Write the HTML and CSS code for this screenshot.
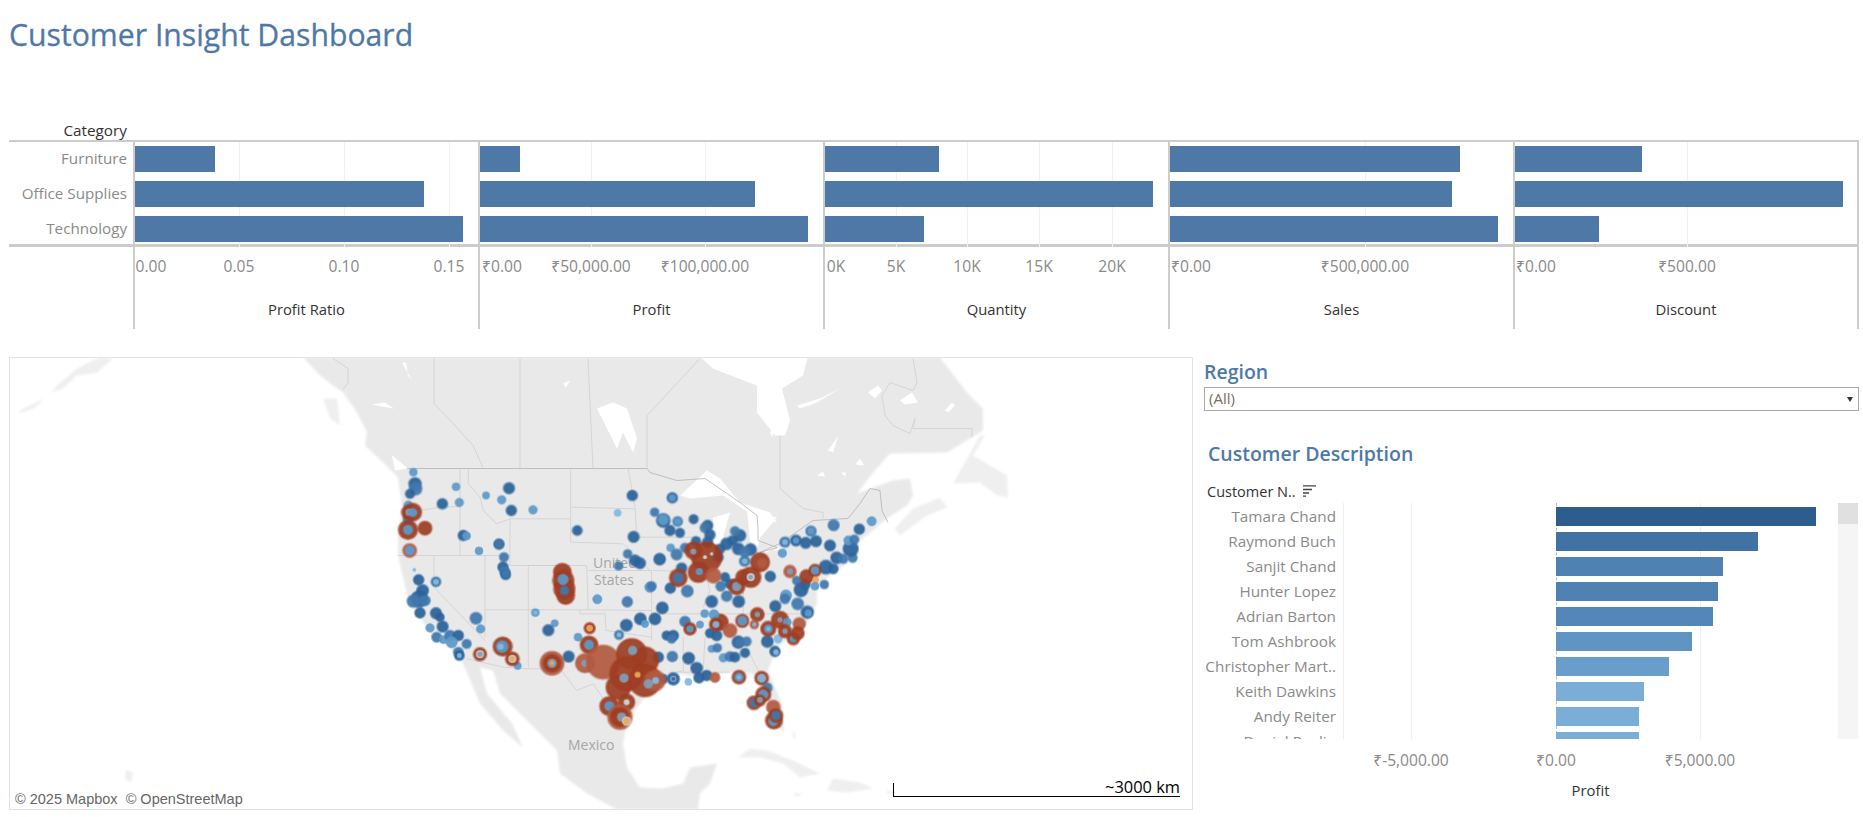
FILE: index.html
```html
<!DOCTYPE html>
<html lang="en">
<head>
<meta charset="utf-8">
<title>Customer Insight Dashboard</title>
<link rel="stylesheet" href="styles.css">
</head>
<body>
<main class="page">
  <h1 class="title">Customer Insight Dashboard</h1>
  <div class="cat-head">Category</div>
  <section class="chart">
    <div class="cats">
      <div class="cat-list">
        <div class="cat">Furniture</div>
        <div class="cat">Office Supplies</div>
        <div class="cat">Technology</div>
      </div>
    </div>
    <div class="panel">
      <div class="plot">
        <i class="grid" style="left:104px"></i><i class="grid" style="left:209px"></i><i class="grid" style="left:314px"></i>
        <div class="bar" style="width:80px"></div><div class="bar" style="width:289px"></div><div class="bar" style="width:328px"></div>
      </div>
      <div class="ticks">
        <span class="tick" style="left:16px">0.00</span><span class="tick" style="left:104px">0.05</span><span class="tick" style="left:209px">0.10</span><span class="tick" style="left:314px">0.15</span>
      </div>
      <div class="axis-title">Profit Ratio</div>
    </div>
    <div class="panel">
      <div class="plot">
        <i class="grid" style="left:111px"></i><i class="grid" style="left:225px"></i>
        <div class="bar" style="width:40px"></div><div class="bar" style="width:275px"></div><div class="bar" style="width:328px"></div>
      </div>
      <div class="ticks">
        <span class="tick" style="left:22px">₹0.00</span><span class="tick" style="left:111px">₹50,000.00</span><span class="tick" style="left:225px">₹100,000.00</span>
      </div>
      <div class="axis-title">Profit</div>
    </div>
    <div class="panel">
      <div class="plot">
        <i class="grid" style="left:71px"></i><i class="grid" style="left:142px"></i><i class="grid" style="left:214px"></i><i class="grid" style="left:287px"></i>
        <div class="bar" style="width:114px"></div><div class="bar" style="width:328px"></div><div class="bar" style="width:99px"></div>
      </div>
      <div class="ticks">
        <span class="tick" style="left:11px">0K</span><span class="tick" style="left:71px">5K</span><span class="tick" style="left:142px">10K</span><span class="tick" style="left:214px">15K</span><span class="tick" style="left:287px">20K</span>
      </div>
      <div class="axis-title">Quantity</div>
    </div>
    <div class="panel">
      <div class="plot">
        <i class="grid" style="left:195px"></i>
        <div class="bar" style="width:290px"></div><div class="bar" style="width:282px"></div><div class="bar" style="width:328px"></div>
      </div>
      <div class="ticks">
        <span class="tick" style="left:21px">₹0.00</span><span class="tick" style="left:195px">₹500,000.00</span>
      </div>
      <div class="axis-title">Sales</div>
    </div>
    <div class="panel panel-last">
      <div class="plot">
        <i class="grid" style="left:172px"></i>
        <div class="bar" style="width:127px"></div><div class="bar" style="width:328px"></div><div class="bar" style="width:84px"></div>
      </div>
      <div class="ticks">
        <span class="tick" style="left:21px">₹0.00</span><span class="tick" style="left:172px">₹500.00</span>
      </div>
      <div class="axis-title">Discount</div>
    </div>
  </section>

  <section class="lower">
    <div class="map">
      <svg class="map-svg" viewBox="10 358 1182 450" aria-hidden="true">
        <defs>
          <filter id="soft" x="-2%" y="-2%" width="104%" height="104%"><feGaussianBlur stdDeviation="0.45"/></filter>
          <filter id="softer" x="-2%" y="-2%" width="104%" height="104%"><feGaussianBlur stdDeviation="1"/></filter>
        </defs>
        <g class="land" filter="url(#softer)">
          <path d="M303 357L320 375L333 385L343 392L357 412L367 432L365 445L383 462L398 477L402 507L398 537L398 555L402 573L408 597L420 617L433 637L453 650L463 663L480 703L503 730L523 747L512 723L487 693L480 667L493 670L500 693L527 720L557 750L560 773L587 793L617 809L698 809L700 793L710 783L717 763L690 767L683 783L663 788L640 787L627 767L623 743L627 720L630 717L657 680L677 673L697 677L730 672L753 673L767 697L778 727L784 731L782 703L768 670L777 647L807 623L817 603L817 587L823 580L847 563L858 553L857 543L873 530L887 518L907 505L913 495L910 478L893 480L857 493L873 472L890 453L947 452L983 430L983 408L967 392L940 357Z"/>
          <path class="faint" d="M953 483L965 462L980 435L985 435L973 455L985 462L1007 475L1008 497L997 495L980 482Z"/>
          <path class="faint" d="M895 528L913 508L940 497L947 507L927 515L900 535Z"/>
          <path class="faint" d="M113 358L97 372L77 375L63 388L52 392L57 385L77 368L93 360L100 357Z"/>
          <path class="faint" d="M43 398L36 402L30 405L20 410L19 413L33 408L40 403Z"/>
          <path class="faint" d="M323 398L337 398L340 425L330 418Z"/>
          <path class="faint" d="M738 757L750 748L767 750L793 760L820 773L800 777L783 763L760 757Z"/>
          <path class="faint" d="M827 790L833 778L860 782L873 788L847 792Z"/>
          <path class="faint" d="M792 792L803 794L797 796Z"/>
          <path class="faint" d="M887 790L895 791L895 794L887 793Z"/>
          <path class="faint" d="M792 730L796 734L794 740Z"/>
          <path class="faint" d="M126 769L133 772L131 782L125 778Z"/>
        </g>
        <g class="water" filter="url(#soft)">
          <path d="M700 356L713 368L757 385L757 412L775 435L785 435L790 420L782 388L803 375L808 356Z"/>
          <path d="M680 495L707 470L720 478L740 502L770 512L777 522L753 515L723 495L690 498Z"/>
          <path d="M713 517L730 512L723 537L720 550L713 550Z"/>
          <path d="M747 510L777 517L760 537L757 550L750 540Z"/>
          <path d="M757 553L780 543L767 552Z"/>
          <path d="M773 550L807 535L800 540L780 550Z"/>
          <path d="M597 408L613 402L627 408L637 438L633 452L623 432L617 448L607 428Z"/>
          <path d="M563 383L570 380L566 387Z"/>
          <path d="M797 405L820 398L840 388L815 403L800 408Z"/>
          <path d="M828 450L838 436L833 452Z"/>
          <path d="M900 400L912 392L918 402L905 404Z"/>
          <path d="M945 410L952 402L955 405L948 412Z"/>
          <path d="M817 475L823 471L825 476Z"/>
          <path d="M855 464L860 458L864 465Z"/>
          <path d="M841 472L846 472L845 476Z"/>
          <path d="M868 392L878 385L882 390L875 398Z"/>
          <path d="M406 362L408 375L412 380L402 362Z"/>
          <path d="M372 404L385 402L394 408L382 406Z"/>
          <path d="M392 455L408 468L395 470Z"/>
          <path d="M770 432L776 425L772 437Z"/>
        </g>
        <path class="border" d="M407 468L647 468L650 472L677 480L705 478L740 502L757 515L758 528L758 540L777 547L760 552L780 543L813 520L848 518L860 503L870 488L880 490L882 510L888 522"/>
        <path class="border thin" d="M333 358L348 368L348 382L343 389M434 358L434 403L452 422L473 445L483 467M520 358L520 468M588 358L593 468M647 468L647 415L700 358M780 435L780 488L803 508L823 512L823 518M913 358L917 382L913 390L890 382L882 395L885 415L893 425L910 433L915 418L913 428L972 428L972 437"/>
        <g transform="translate(330 440) scale(.3333)">
          <path class="border state" d="M270 210L330 200L390 198M390 85L390 345M415 85L415 130L450 170L460 210L500 250L540 235L720 235M540 235L540 375L720 375M722 85L722 305M722 200L915 205M895 85L915 200L920 290L1110 290M722 305L880 310L960 390M205 345L540 345M312 345L312 440L465 600M465 345L465 590M595 375L595 685M595 375L770 375L775 508M465 508L775 508M750 508L750 520L825 520L828 570L965 590M410 655L520 680L590 685L690 685L740 750L790 730L830 790M775 390L965 390M775 508L965 510M965 390L965 600M1110 290L1125 395M970 390L1125 395M1125 395L1140 450L1120 500M1060 590L1060 690L1040 695L1200 695M1125 590L1120 690M965 520L1240 520M1240 600L1290 700M1240 400L1240 520M1240 520L1440 520"/>
        </g>
        <text class="place" x="593" y="567">United</text>
        <text class="place" x="594" y="584">States</text>
        <text class="place" x="568" y="749">Mexico</text>
        <g class="dots" filter="url(#soft)" transform="translate(330 440) scale(.3333)">
          <circle class="b3" cx="250" cy="95" r="12"/><circle class="b1" cx="255" cy="130" r="18"/><circle class="b2" cx="257" cy="145" r="18"/><circle class="b1" cx="240" cy="160" r="13"/>
          <circle class="b3" cx="378" cy="139" r="12"/><circle class="b1" cx="337" cy="190" r="15"/><circle class="b3" cx="388" cy="186" r="13"/><circle class="b3" cx="468" cy="165" r="11"/><circle class="b3" cx="515" cy="178" r="13"/><circle class="b1" cx="537" cy="143" r="16"/><circle class="b1" cx="544" cy="210" r="15"/><circle class="b3" cx="609" cy="208" r="13"/>
          <circle class="b3" cx="235" cy="195" r="14"/><circle class="b2" cx="235" cy="235" r="15"/>
          <circle class="b1" cx="400" cy="285" r="15"/><circle class="b3" cx="410" cy="286" r="12"/><circle class="b3" cx="447" cy="331" r="12"/><circle class="b1" cx="507" cy="311" r="15"/><circle class="b2" cx="507" cy="311" r="10"/><circle class="b2" cx="522" cy="350" r="13"/><circle class="b1" cx="519" cy="380" r="15"/><circle class="b2" cx="525" cy="395" r="15"/><circle class="b1" cx="527" cy="403" r="14"/><circle class="b2" cx="527" cy="400" r="10"/>
          <circle class="b4" cx="253" cy="388" r="5"/><circle class="b1" cx="266" cy="418" r="15"/><circle class="b2" cx="318" cy="424" r="14"/><circle class="b4" cx="318" cy="424" r="8"/>
          <circle class="b1" cx="278" cy="450" r="17"/><circle class="b1" cx="268" cy="475" r="24"/><circle class="b2" cx="250" cy="482" r="18"/><circle class="b2" cx="285" cy="480" r="15"/><circle class="b1" cx="270" cy="517" r="15"/><circle class="b1" cx="318" cy="518" r="16"/><circle class="b1" cx="330" cy="530" r="12"/><circle class="b1" cx="338" cy="558" r="16"/><circle class="b3" cx="300" cy="562" r="13"/><circle class="b2" cx="320" cy="590" r="14"/><circle class="b3" cx="340" cy="597" r="12"/><circle class="b2" cx="360" cy="585" r="15"/><circle class="b1" cx="385" cy="585" r="15"/><circle class="b3" cx="365" cy="605" r="17"/><circle class="b2" cx="410" cy="610" r="13"/><circle class="b2" cx="385" cy="635" r="14"/><circle class="b1" cx="388" cy="645" r="14"/><circle class="b4" cx="388" cy="645" r="7"/>
          <circle class="b2" cx="438" cy="533" r="17"/><circle class="b3" cx="452" cy="565" r="13"/><circle class="b3" cx="616" cy="516" r="12"/><circle class="b4" cx="616" cy="516" r="6"/><circle class="b3" cx="674" cy="548" r="11"/><circle class="b1" cx="655" cy="569" r="16"/><circle class="b3" cx="744" cy="590" r="12"/><circle class="b2" cx="867" cy="583" r="13"/><circle class="b4" cx="867" cy="583" r="7"/><circle class="b1" cx="889" cy="554" r="17"/><circle class="b1" cx="931" cy="535" r="17"/><circle class="b3" cx="945" cy="550" r="11"/><circle class="b1" cx="975" cy="535" r="17"/><circle class="b1" cx="997" cy="502" r="17"/>
          <circle class="b1" cx="742" cy="270" r="14"/><circle class="b1" cx="907" cy="165" r="15"/><circle class="b4" cx="863" cy="217" r="11"/><circle class="b1" cx="911" cy="289" r="16"/><circle class="b2" cx="893" cy="340" r="12"/><circle class="b2" cx="866" cy="376" r="12"/><circle class="b1" cx="915" cy="360" r="16"/><circle class="b1" cx="930" cy="368" r="16"/><circle class="b1" cx="989" cy="356" r="17"/>
          <circle class="b1" cx="1027" cy="172" r="15"/><circle class="b3" cx="1027" cy="172" r="10"/><circle class="b2" cx="974" cy="215" r="12"/><circle class="b1" cx="1000" cy="240" r="20"/><circle class="b3" cx="1000" cy="238" r="16"/><circle class="b2" cx="1043" cy="243" r="14"/><circle class="b3" cx="1043" cy="243" r="10"/><circle class="b1" cx="1020" cy="270" r="15"/><circle class="b1" cx="1050" cy="277" r="13"/><circle class="b1" cx="1091" cy="236" r="13"/><circle class="b1" cx="1133" cy="255" r="15"/><circle class="b2" cx="1125" cy="262" r="14"/><circle class="b1" cx="1140" cy="283" r="15"/>
          <circle class="b3" cx="1022" cy="322" r="12"/><circle class="b2" cx="1065" cy="322" r="13"/><circle class="b2" cx="1040" cy="342" r="16"/><circle class="b1" cx="1098" cy="302" r="13"/><circle class="b1" cx="1133" cy="305" r="15"/><circle class="b1" cx="1170" cy="325" r="14"/><circle class="b1" cx="1190" cy="310" r="17"/><circle class="b1" cx="1208" cy="300" r="14"/><circle class="b1" cx="1230" cy="285" r="17"/><circle class="b2" cx="1215" cy="272" r="13"/><circle class="b1" cx="1225" cy="325" r="17"/><circle class="b1" cx="1262" cy="327" r="17"/><circle class="b2" cx="1245" cy="335" r="15"/><circle class="b1" cx="1165" cy="350" r="14"/>
          <circle class="b3" cx="960" cy="440" r="16"/><circle class="b2" cx="965" cy="437" r="13"/><circle class="b1" cx="1021" cy="443" r="15"/><circle class="b1" cx="1055" cy="383" r="15"/><circle class="b2" cx="1072" cy="452" r="17"/><circle class="b1" cx="1145" cy="483" r="17"/><circle class="b2" cx="1172" cy="437" r="14"/><circle class="b1" cx="1200" cy="430" r="14"/><circle class="b2" cx="1190" cy="467" r="15"/><circle class="b1" cx="1226" cy="483" r="17"/><circle class="b1" cx="1185" cy="410" r="13"/><circle class="b3" cx="802" cy="476" r="14"/><circle class="b2" cx="892" cy="484" r="15"/>
          <circle class="b1" cx="985" cy="650" r="15"/><circle class="b2" cx="1027" cy="648" r="15"/><circle class="b1" cx="1076" cy="653" r="17"/><circle class="b1" cx="1100" cy="683" r="17"/><circle class="b1" cx="1000" cy="715" r="13"/><circle class="b1" cx="1030" cy="715" r="18"/><circle class="w" cx="1030" cy="715" r="9"/><circle class="b1" cx="1030" cy="715" r="5"/><circle class="b4" cx="1075" cy="724" r="11"/><circle class="b1" cx="1107" cy="712" r="15"/><circle class="b1" cx="1130" cy="705" r="15"/><circle class="r2" cx="1155" cy="711" r="14"/>
          <circle class="b2" cx="1065" cy="543" r="15"/><circle class="b1" cx="1010" cy="585" r="13"/><circle class="b1" cx="1030" cy="585" r="15"/><circle class="b2" cx="1025" cy="595" r="12"/><circle class="b3" cx="1124" cy="519" r="12"/><circle class="b3" cx="1110" cy="552" r="11"/><circle class="b1" cx="1140" cy="578" r="13"/><circle class="b1" cx="1160" cy="585" r="15"/><circle class="b1" cx="1225" cy="605" r="18"/><circle class="b2" cx="1228" cy="607" r="12"/><circle class="b2" cx="1250" cy="603" r="13"/><circle class="b3" cx="1145" cy="625" r="11"/><circle class="b2" cx="1162" cy="622" r="12"/><circle class="b1" cx="1245" cy="637" r="13"/><circle class="b3" cx="1180" cy="652" r="13"/><circle class="b2" cx="1200" cy="648" r="14"/><circle class="b1" cx="1215" cy="650" r="14"/><circle class="b1" cx="716" cy="648" r="16"/><circle class="b3" cx="563" cy="676" r="11"/>
          <circle class="r1" cx="248" cy="215" r="26"/><circle class="r1" cx="235" cy="215" r="20"/><circle class="g" cx="237" cy="215" r="11"/><circle class="b3" cx="248" cy="216" r="13"/><circle class="r1" cx="234" cy="268" r="28"/><circle class="b3" cx="234" cy="268" r="14"/><circle class="r1" cx="285" cy="263" r="20"/><circle class="r2" cx="239" cy="330" r="20"/><circle class="b3" cx="239" cy="330" r="14"/>
          <circle class="r1" cx="697" cy="395" r="26"/><circle class="r1" cx="700" cy="420" r="31"/><circle class="r1" cx="703" cy="445" r="31"/><circle class="r1" cx="707" cy="465" r="26"/><circle class="b3" cx="699" cy="417" r="16"/><circle class="b2" cx="703" cy="450" r="12"/>
          <circle class="r1" cx="518" cy="618" r="28"/><circle class="b3" cx="516" cy="618" r="18"/><circle class="b4" cx="512" cy="618" r="9"/><circle class="r1" cx="547" cy="655" r="20"/><circle class="w" cx="547" cy="655" r="12"/><circle class="o" cx="547" cy="655" r="8"/><circle class="r1" cx="450" cy="641" r="19"/><circle class="w" cx="450" cy="641" r="12"/><circle class="g" cx="450" cy="641" r="8"/>
          <circle class="r2" cx="666" cy="668" r="35"/><circle class="r1" cx="666" cy="668" r="26"/><circle class="g" cx="666" cy="668" r="14"/><circle class="o" cx="666" cy="668" r="7"/><circle class="r1" cx="777" cy="613" r="26"/><circle class="b3" cx="777" cy="613" r="14"/><circle class="r1" cx="779" cy="563" r="16"/><circle class="o" cx="779" cy="563" r="10"/><circle class="r2" cx="765" cy="668" r="28"/><circle class="g" cx="765" cy="668" r="11"/><circle class="r2" cx="820" cy="665" r="50"/>
          <circle class="r1" cx="905" cy="640" r="45"/><circle class="r1" cx="945" cy="660" r="40"/><circle class="r1" cx="890" cy="700" r="50"/><circle class="r1" cx="945" cy="720" r="48"/><circle class="r2" cx="975" cy="720" r="30"/><circle class="r1" cx="865" cy="740" r="36"/><circle class="g" cx="908" cy="630" r="14"/><circle class="g" cx="882" cy="713" r="14"/><circle class="o" cx="923" cy="703" r="9"/><circle class="g" cx="955" cy="730" r="14"/><circle class="b4" cx="977" cy="720" r="10"/>
          <circle class="r1" cx="838" cy="797" r="28"/><circle class="b3" cx="838" cy="797" r="14"/><circle class="r1" cx="890" cy="785" r="24"/><circle class="w" cx="890" cy="785" r="9"/><circle class="r2" cx="870" cy="830" r="36"/><circle class="r1" cx="870" cy="830" r="28"/><circle class="g" cx="875" cy="830" r="14"/><circle class="w" cx="890" cy="842" r="14"/><circle class="o" cx="890" cy="842" r="10"/>
          <circle class="r1" cx="1227" cy="710" r="20"/><circle class="b3" cx="1227" cy="710" r="13"/><circle class="b4" cx="1227" cy="710" r="7"/><circle class="r1" cx="1295" cy="713" r="20"/><circle class="b4" cx="1295" cy="713" r="13"/><circle class="b2" cx="1312" cy="742" r="14"/><circle class="r1" cx="1300" cy="762" r="22"/><circle class="b3" cx="1300" cy="762" r="14"/><circle class="r1" cx="1272" cy="787" r="20"/><circle class="b2" cx="1272" cy="787" r="12"/><circle class="r1" cx="1290" cy="780" r="16"/><circle class="g" cx="1290" cy="778" r="9"/><circle class="r2" cx="1330" cy="800" r="20"/><circle class="r1" cx="1332" cy="840" r="25"/><circle class="b3" cx="1330" cy="842" r="14"/><circle class="r1" cx="1338" cy="825" r="20"/><circle class="b2" cx="1338" cy="825" r="12"/>
          <circle class="r1" cx="1080" cy="565" r="18"/><circle class="b3" cx="1080" cy="565" r="10"/><circle class="r1" cx="1170" cy="545" r="24"/><circle class="b3" cx="1152" cy="522" r="15"/><circle class="r1" cx="1158" cy="552" r="19"/><circle class="b4" cx="1158" cy="552" r="10"/><circle class="r2" cx="1200" cy="570" r="20"/><circle class="r1" cx="1237" cy="541" r="19"/><circle class="b3" cx="1237" cy="541" r="14"/>
          <circle class="r1" cx="1045" cy="412" r="26"/><circle class="b2" cx="1045" cy="412" r="14"/><circle class="r1" cx="1130" cy="350" r="45"/><circle class="r1" cx="1090" cy="330" r="25"/><circle class="r1" cx="1105" cy="395" r="30"/><circle class="r2" cx="1150" cy="405" r="22"/><circle class="w" cx="1125" cy="350" r="6"/><circle class="w" cx="1145" cy="340" r="5"/><circle class="b3" cx="1108" cy="393" r="10"/><circle class="g" cx="1090" cy="333" r="9"/>
          <circle class="r1" cx="1220" cy="438" r="24"/><circle class="g" cx="1220" cy="438" r="14"/><circle class="r1" cx="1240" cy="410" r="22"/><circle class="r1" cx="1262" cy="410" r="30"/><circle class="w" cx="1262" cy="410" r="12"/><circle class="g" cx="1262" cy="410" r="7"/><circle class="r1" cx="1290" cy="365" r="28"/><circle class="r2" cx="1297" cy="368" r="14"/><circle class="b2" cx="1244" cy="362" r="15"/><circle class="b4" cx="1244" cy="362" r="8"/>
        </g>
        <g class="dots" filter="url(#soft)" transform="translate(700 440) scale(.3333)">
          <circle class="b1" cx="211" cy="408" r="15"/><circle class="b2" cx="290" cy="420" r="12"/><circle class="b3" cx="258" cy="465" r="17"/><circle class="b2" cx="255" cy="475" r="14"/><circle class="b1" cx="226" cy="497" r="16"/><circle class="b2" cx="293" cy="490" r="17"/><circle class="b1" cx="322" cy="515" r="18"/><circle class="b3" cx="325" cy="518" r="10"/><circle class="b1" cx="303" cy="448" r="20"/><circle class="b1" cx="315" cy="432" r="15"/><circle class="b2" cx="373" cy="432" r="12"/><circle class="b1" cx="378" cy="380" r="20"/><circle class="b1" cx="400" cy="385" r="14"/><circle class="b1" cx="410" cy="352" r="17"/><circle class="b2" cx="430" cy="355" r="13"/><circle class="b2" cx="458" cy="352" r="13"/><circle class="b1" cx="452" cy="325" r="22"/><circle class="b3" cx="445" cy="300" r="14"/><circle class="b2" cx="463" cy="297" r="13"/><circle class="b1" cx="390" cy="315" r="16"/><circle class="b1" cx="348" cy="302" r="16"/><circle class="b1" cx="317" cy="307" r="16"/><circle class="b1" cx="288" cy="300" r="16"/><circle class="b3" cx="288" cy="300" r="9"/><circle class="b2" cx="255" cy="305" r="15"/><circle class="b4" cx="255" cy="305" r="8"/><circle class="b3" cx="247" cy="338" r="13"/><circle class="b2" cx="333" cy="272" r="15"/><circle class="b3" cx="333" cy="272" r="10"/><circle class="b2" cx="401" cy="254" r="16"/><circle class="b1" cx="478" cy="266" r="15"/><circle class="b3" cx="515" cy="242" r="14"/><circle class="b1" cx="202" cy="603" r="17"/><circle class="b1" cx="225" cy="633" r="15"/><circle class="b4" cx="228" cy="635" r="8"/><circle class="b4" cx="234" cy="595" r="13"/>
          <circle class="r1" cx="172" cy="522" r="20"/><circle class="g" cx="172" cy="522" r="8"/><circle class="r2" cx="163" cy="552" r="12"/><circle class="b4" cx="163" cy="552" r="6"/><circle class="r1" cx="205" cy="565" r="22"/><circle class="b3" cx="205" cy="565" r="12"/><circle class="b4" cx="205" cy="565" r="6"/><circle class="r1" cx="240" cy="538" r="25"/><circle class="g" cx="240" cy="538" r="8"/><circle class="b3" cx="262" cy="545" r="12"/><circle class="r2" cx="298" cy="550" r="18"/><circle class="r1" cx="255" cy="572" r="19"/><circle class="g" cx="255" cy="572" r="8"/><circle class="r1" cx="280" cy="595" r="18"/><circle class="b3" cx="280" cy="595" r="10"/><circle class="r1" cx="293" cy="578" r="19"/>
          <circle class="r1" cx="320" cy="408" r="20"/><circle class="r1" cx="345" cy="390" r="18"/><circle class="b3" cx="345" cy="390" r="12"/><circle class="o" cx="347" cy="418" r="10"/><circle class="b3" cx="345" cy="437" r="12"/><circle class="r2" cx="270" cy="393" r="18"/><circle class="g" cx="270" cy="393" r="9"/>
        </g>
      </svg>
      <div class="attrib">© 2025 Mapbox&nbsp; © OpenStreetMap</div>
      <div class="scale">~3000 km</div>
    </div>

    <aside class="side">
      <h2 class="filter-title">Region</h2>
      <div class="select"><span>(All)</span><i class="caret"></i></div>
      <h2 class="desc-title">Customer Description</h2>
      <div class="cust-head">Customer N..
        <svg class="sort" viewBox="0 0 13 12" aria-hidden="true"><path d="M0 .8H13M0 4.5H9M0 8H6M0 11.2H3"/></svg>
      </div>
      <div class="cust-body">
        <div class="cust-rows">
          <i class="vline" style="left:140px"></i><i class="vline" style="left:208px"></i><i class="vline zero" style="left:353px"></i><i class="vline" style="left:497px"></i>
          <div class="row"><span class="name">Tamara Chand</span><div class="cbar s1" style="width:260px"></div></div>
          <div class="row"><span class="name">Raymond Buch</span><div class="cbar s2" style="width:202px"></div></div>
          <div class="row"><span class="name">Sanjit Chand</span><div class="cbar s3" style="width:167px"></div></div>
          <div class="row"><span class="name">Hunter Lopez</span><div class="cbar s3" style="width:162px"></div></div>
          <div class="row"><span class="name">Adrian Barton</span><div class="cbar s4" style="width:157px"></div></div>
          <div class="row"><span class="name">Tom Ashbrook</span><div class="cbar s5" style="width:136px"></div></div>
          <div class="row"><span class="name">Christopher Mart..</span><div class="cbar s6" style="width:113px"></div></div>
          <div class="row"><span class="name">Keith Dawkins</span><div class="cbar s7" style="width:88px"></div></div>
          <div class="row"><span class="name">Andy Reiter</span><div class="cbar s7" style="width:83px"></div></div>
          <div class="row"><span class="name">Daniel Raglin</span><div class="cbar s7" style="width:83px"></div></div>
        </div>
        <div class="scrollbar"><div class="thumb"></div></div>
      </div>
      <div class="cust-ticks">
        <span class="tick" style="left:208px">₹-5,000.00</span><span class="tick" style="left:353px">₹0.00</span><span class="tick" style="left:497px">₹5,000.00</span>
      </div>
      <div class="cust-axis">Profit</div>
    </aside>
  </section>
</main>
</body>
</html>
```

FILE: styles.css
```css
* { box-sizing: border-box; }
html, body { margin: 0; padding: 0; background: #fff; }
body { font-family: "Open Sans", "Noto Sans", "Liberation Sans", sans-serif; }
.page { width: 1863px; height: 817px; overflow: hidden; display: flex; flex-direction: column; }

.title { margin: 0; height: 120px; padding: 13px 0 0 9px; font-size: 30.2px; line-height: 44px; font-weight: 400; color: #4e79a7; -webkit-text-stroke: .3px #4e79a7; }
.cat-head { height: 20px; width: 133px; padding-right: 6px; text-align: right; font-size: 15.3px; line-height: 20px; color: #333; }

.chart { display: flex; margin-left: 9px; width: 1851px; }
.cats { width: 124px; flex: none; }
.cat-list { height: 107px; border-top: 2px solid #ccc; border-bottom: 3px solid #ccc; padding-top: 4px; display: flex; flex-direction: column; gap: 9px; }
.cat { height: 26px; line-height: 24px; text-align: right; padding-right: 6px; font-size: 15.2px; color: #8a8a8a; white-space: nowrap; }

.panel { width: 345px; height: 189px; flex: none; border-left: 2px solid #ccc; }
.panel-last { width: 346px; border-right: 2px solid #ccc; }
.plot { position: relative; height: 107px; border-top: 2px solid #ccc; border-bottom: 3px solid #ccc; padding-top: 4px; display: flex; flex-direction: column; gap: 9px; }
.bar { position: relative; height: 26px; background: #4e79a7; }
.grid { position: absolute; top: 0; bottom: -3px; width: 1px; background: #f0f0f0; }
.ticks { position: relative; height: 43px; }
.tick { position: absolute; top: 9px; transform: translateX(-50%); font-size: 15.6px; line-height: 20px; color: #8a8a8a; white-space: nowrap; }
.axis-title { height: 39px; padding-top: 9px; text-align: center; font-size: 14.8px; line-height: 20px; color: #333; }

.lower { display: flex; gap: 10px; margin: 28px 0 0 9px; }
.map { position: relative; width: 1184px; height: 453px; flex: none; border: 1px solid #e2e2e2; overflow: hidden; }
.map-svg { display: block; width: 1182px; height: 451px; }
.land path { fill: #e9e9e9; }
.land path.faint { fill: #efefef; }
.water path { fill: #fff; }
.border { fill: none; stroke: #b2b2b2; stroke-width: .8; }
.border.thin { stroke: #c8c8c8; stroke-width: .6; }
.border.state { stroke: #cacaca; stroke-width: 2; }
.place { font-family: "Open Sans", sans-serif; font-size: 14px; fill: #a6a6a6; }
.dots circle { opacity: .93; stroke-width: 7; stroke-opacity: .55; }
.b1 { fill: #2b6299; stroke: #2b6299; }
.b2 { fill: #3f78ad; stroke: #3f78ad; }
.dots .b3 { fill: #5c99ca; stroke: #5c99ca; stroke-width: 3; }
.dots .b4 { fill: #83b9e0; stroke: #83b9e0; stroke-width: 2; }
.r1 { fill: #9e3d22; stroke: #9e3d22; }
.r2 { fill: #b35a40; stroke: #b35a40; }
.o { fill: #f0a656; }
.g { fill: #7f9fb8; }
.w { fill: #c9d9e2; }
.attrib { position: absolute; left: 3px; bottom: 0; padding: 0 2px; background: rgba(255,255,255,.7); font-family: "Liberation Sans", sans-serif; font-size: 14.5px; line-height: 20px; color: #666; white-space: nowrap; }
.scale { position: absolute; right: 12px; bottom: 12px; width: 287px; height: 14px; border-left: 1px solid #000; border-bottom: 1.5px solid #000; text-align: right; font-family: "Open Sans", sans-serif; font-size: 16.4px; line-height: 8px; color: #000; }

.side { width: 656px; flex: none; display: flex; flex-direction: column; }
.filter-title { margin: 0 0 0 1px; height: 30px; font-size: 19.5px; line-height: 30px; font-weight: 600; color: #4e79a7; }
.select { height: 24px; margin-left: 1px; width: 655px; border: 1px solid #a8a8a8; display: flex; align-items: center; justify-content: space-between; padding: 0 5px 2px 4px; font-size: 15px; color: #7f6b5e; }
.caret { width: 0; height: 0; margin-top: 2px; border-left: 3.5px solid transparent; border-right: 3.5px solid transparent; border-top: 5px solid #333; }
.desc-title { margin: 30px 0 0 5px; height: 26px; font-size: 19.5px; line-height: 26px; font-weight: 600; color: #4e79a7; white-space: nowrap; }
.cust-head { margin: 13px 0 0 4px; height: 23px; display: flex; align-items: center; gap: 7px; font-size: 14.5px; line-height: 20px; color: #333; }
.sort { width: 13px; height: 12px; margin-top: -2px; }
.sort path { fill: none; stroke: #444; stroke-width: 1.3; }
.cust-body { display: flex; height: 236px; }
.cust-rows { position: relative; width: 635px; overflow: hidden; }
.scrollbar { width: 20px; background: #f5f5f5; }
.thumb { height: 21px; background: #e0e0e0; }
.row { position: relative; height: 25px; padding-top: 4px; display: flex; }
.name { width: 133px; margin-right: 220px; flex: none; text-align: right; font-size: 15.3px; line-height: 19px; color: #8a8a8a; white-space: nowrap; }
.cbar { position: relative; height: 19px; }
.s1 { background: #2c5d8c; }
.s2 { background: #4072a3; }
.s3 { background: #4f82b3; }
.s4 { background: #5487b7; }
.s5 { background: #5f94c3; }
.s6 { background: #699dcb; }
.s7 { background: #7aaed6; }
.vline { position: absolute; top: 0; bottom: 0; width: 1px; background: #efefef; }
.vline.zero { background: none; border-left: 1px dashed #bbb; }
.cust-ticks { position: relative; height: 40px; }
.cust-ticks .tick { top: 11px; }
.cust-axis { width: 775px; text-align: center; font-size: 14.8px; line-height: 20px; color: #333; padding-top: 1px; }
```
